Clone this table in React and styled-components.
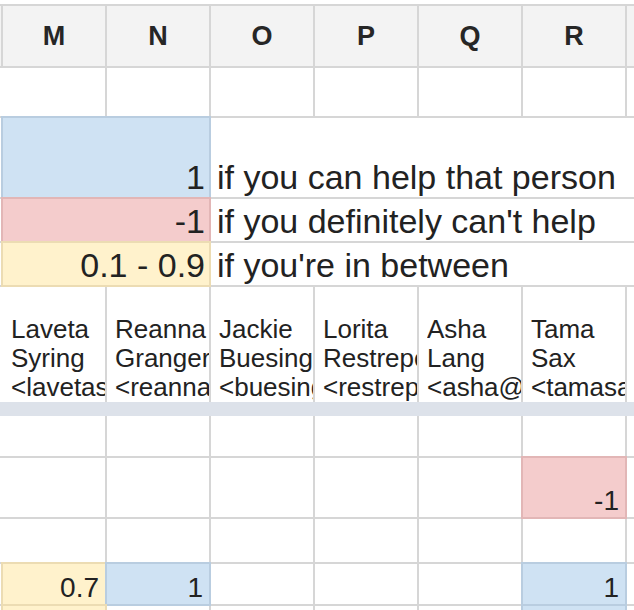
import React from "react";
import styled, { createGlobalStyle, css } from "styled-components";

const GlobalStyle = createGlobalStyle`
  html, body {
    margin: 0;
    padding: 0;
    background: #ffffff;
    overflow: hidden;
  }
`;

const fills = {
  blue: { bg: "#cfe2f3", edge: "#b9cde0" },
  pink: { bg: "#f4cccc", edge: "#e2b6b6" },
  yellow: { bg: "#fff2cc", edge: "#ecdcb3" },
};

const Page = styled.div`
  width: 634px;
  height: 610px;
  padding-top: 4px;
  box-sizing: border-box;
  overflow: hidden;
  font-family: "Liberation Sans", Arial, sans-serif;
  color: #222222;
`;

const Sheet = styled.div`
  display: grid;
  grid-template-columns: 1px repeat(6, 102px) 1fr;
  grid-template-rows: 60px 48px 79px 42px 42px 115px 10px 40px 59px 43px 40px 40px;
  gap: 2px;
  padding-top: 2px;
  background: #d6d6d6;
`;

const HeadCell = styled.div`
  background: #f3f3f3;
  display: flex;
  align-items: center;
  justify-content: center;
  font-weight: 700;
  font-size: 27px;
  color: #262626;
`;

const Cell = styled.div`
  background: #ffffff;
  display: flex;
  align-items: flex-end;
  justify-content: ${p => (p.$right ? "flex-end" : "flex-start")};
  grid-column: ${p => p.$span || "auto"};
  padding: 0 6px 0 6px;
  box-sizing: border-box;
  min-width: 0;
  overflow: hidden;
  white-space: nowrap;
  font-size: 28px;
  line-height: 1.15;
  ${p =>
    p.$fill &&
    css`
      background: ${fills[p.$fill].bg};
      box-shadow: 0 0 0 2px ${fills[p.$fill].edge};
    `}
`;

const LegendValue = styled(Cell)`
  font-size: 34px;
  padding-right: 4px;
`;

const LegendText = styled(Cell)`
  font-size: 34px;
  padding-left: 6px;
  overflow: visible;
`;

const NameCell = styled(Cell)`
  flex-direction: column;
  align-items: stretch;
  justify-content: flex-end;
  padding: 0 0 0 8px;
  font-size: 26px;
  line-height: 29px;
`;

// each line of a name cell is clipped at the cell edge, like a spreadsheet
const NameLine = styled.span`
  display: block;
  white-space: nowrap;
  overflow: hidden;
  text-overflow: clip;
`;

const FrozenBar = styled.div`
  grid-column: 1 / -1;
  background: #dde2ea;
  margin: -2px 0;
`;

const letters = ["M", "N", "O", "P", "Q", "R"];

const legend = [
  { value: "1", fill: "blue", text: "if you can help that person" },
  { value: "-1", fill: "pink", text: "if you definitely can't help" },
  { value: "0.1 - 0.9", fill: "yellow", text: "if you're in between" },
];

const people = [
  ["Laveta", "Syring", "<lavetasyring@gmail.com>"],
  ["Reanna", "Granger", "<reannagranger@gmail.com>"],
  ["Jackie", "Buesing", "<buesingj@gmail.com>"],
  ["Lorita", "Restrepo", "<restrepol@gmail.com>"],
  ["Asha", "Lang", "<asha@langfamily.com>"],
  ["Tama", "Sax", "<tamasax@gmail.com>"],
];

// one entry per visible row below the freeze bar, keyed by column index 0-5
const rows = [
  {},
  { 5: { v: "-1", fill: "pink" } },
  {},
  { 0: { v: "0.7", fill: "yellow" }, 1: { v: "1", fill: "blue" }, 5: { v: "1", fill: "blue" } },
  { 0: { v: "", fill: "yellow" }, 5: { v: "", fill: "blue" } },
];

export default function App() {
  return (
    <Page>
      <GlobalStyle />
      <Sheet>
        <HeadCell />
        {letters.map(l => (
          <HeadCell key={l}>{l}</HeadCell>
        ))}
        <HeadCell />

        {Array.from({ length: 8 }, (_, i) => (
          <Cell key={"e" + i} />
        ))}

        {legend.map(row => (
          <React.Fragment key={row.text}>
            <Cell />
            <LegendValue $right $fill={row.fill} $span="span 2">
              {row.value}
            </LegendValue>
            <LegendText $span="span 5">{row.text}</LegendText>
          </React.Fragment>
        ))}

        <Cell />
        {people.map(p => (
          <NameCell key={p[0]}>
            {p.map(line => (
              <NameLine key={line}>{line}</NameLine>
            ))}
          </NameCell>
        ))}
        <Cell />

        <FrozenBar />

        {rows.map((row, r) => (
          <React.Fragment key={"r" + r}>
            <Cell />
            {letters.map((l, c) => (
              <Cell key={l} $right $fill={row[c] && row[c].fill}>
                {row[c] && row[c].v}
              </Cell>
            ))}
            <Cell />
          </React.Fragment>
        ))}
      </Sheet>
    </Page>
  );
}
